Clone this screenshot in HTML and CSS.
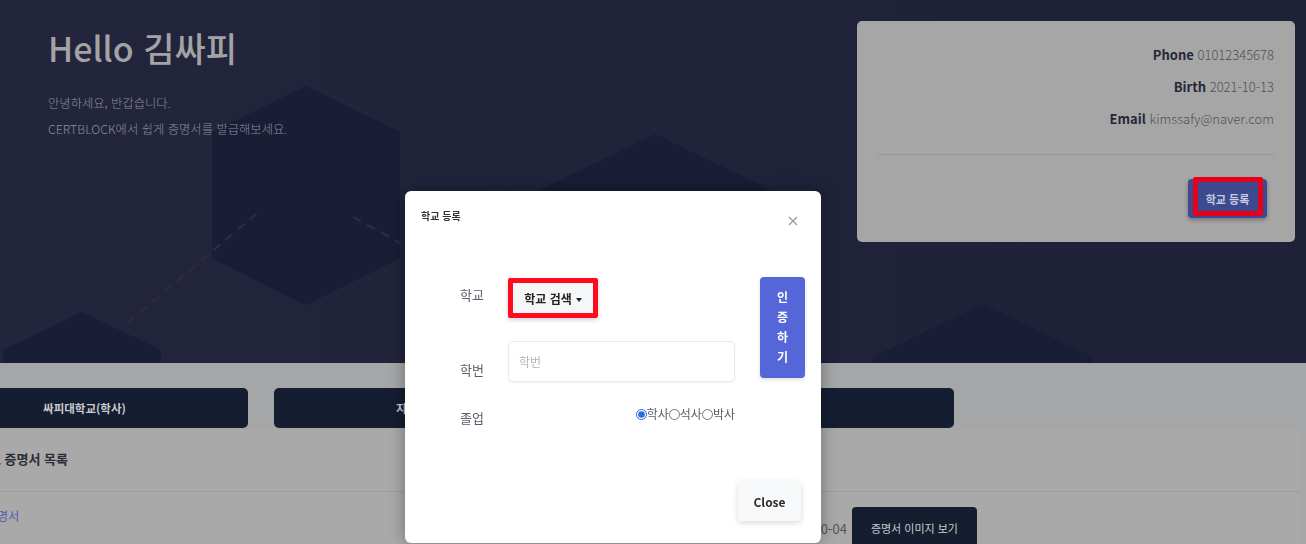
FILE: index.html
```html
<!DOCTYPE html>
<html lang="ko">
<head>
<meta charset="utf-8">
<title>CERTBLOCK - 학교 등록</title>
<link rel="stylesheet" href="styles.css">
</head>
<body>
<div class="page">
  <header class="hero">
    <svg class="hero-bg" width="1306" height="363" viewBox="0 0 1306 363" aria-hidden="true">
      <polygon class="hex" points="306,86 400,132 400,258 306,305 212,258 212,132"/>
      <polygon class="hex" points="655,134 770,190 770,340 655,396 540,340 540,190"/>
      <polygon class="hex" points="983,304 1093,357 1093,500 983,553 873,500 873,357"/>
      <polygon class="hex" points="82,312 161,350 161,500 82,540 3,500 3,350"/>
      <line class="dash" x1="128" y1="323" x2="256" y2="214"/>
      <line class="dash" x1="353" y1="217" x2="400" y2="243"/>
    </svg>
    <div class="greet">
      <h1 class="greet-title">Hello 김싸피</h1>
      <p class="greet-text">안녕하세요, 반갑습니다.<br>CERTBLOCK에서 쉽게 증명서를 발급해보세요.</p>
    </div>
    <aside class="profile">
      <dl class="profile-info">
        <div class="info-row"><dt>Phone</dt> <dd>01012345678</dd></div>
        <div class="info-row"><dt>Birth</dt> <dd>2021-10-13</dd></div>
        <div class="info-row"><dt>Email</dt> <dd>kimssafy@naver.com</dd></div>
      </dl>
      <hr class="profile-line">
      <div class="profile-foot">
        <button class="btn-school mark">학교 등록</button>
      </div>
    </aside>
  </header>

  <section class="content">
    <nav class="tabs">
      <button class="tab">싸피대학교(학사)</button>
      <button class="tab">지역대학교(석사)</button>
      <button class="tab">싸피고(졸업)</button>
    </nav>
    <div class="cert-card">
      <h2 class="cert-title">학교 증명서 목록</h2>
      <div class="cert-row">
        <a class="cert-name" href="#">졸업증명서</a>
        <div class="cert-meta">
          <span class="cert-date">2021-10-04</span>
          <button class="btn-dark">증명서 이미지 보기</button>
        </div>
      </div>
    </div>
  </section>
</div>

<div class="modal" role="dialog" aria-label="학교 등록">
  <div class="modal-head">
    <h3 class="modal-title">학교 등록</h3>
    <button class="modal-x" aria-label="close">
      <svg width="10" height="10" viewBox="0 0 10 10"><path d="M1 1L9 9M9 1L1 9" stroke="#9a9a9a" stroke-width="1.3" fill="none"/></svg>
    </button>
  </div>
  <div class="modal-body">
    <label class="lab lab-1">학교</label>
    <button class="dropdown">학교 검색</button>
    <button class="verify">인증하기</button>
    <label class="lab lab-2">학번</label>
    <input class="field" type="text" placeholder="학번">
    <label class="lab lab-3">졸업</label>
    <div class="radios">
      <label class="radio"><input type="radio" name="deg" checked>학사</label>
      <label class="radio"><input type="radio" name="deg">석사</label>
      <label class="radio"><input type="radio" name="deg">박사</label>
    </div>
  </div>
  <div class="modal-foot">
    <button class="btn-close">Close</button>
  </div>
</div>
</body>
</html>
```

FILE: styles.css
```css
* { box-sizing: border-box; }

html, body {
  margin: 0;
  height: 544px;
  overflow: hidden;
}

body {
  font-family: "Noto Sans CJK KR", "Noto Sans", sans-serif;
  background: #a4a6a8;
  color: #333;
}

button, input {
  font-family: inherit;
}

/* ---------- hero ---------- */
.hero {
  position: relative;
  height: 363px;
  display: flex;
  justify-content: space-between;
  align-items: flex-start;
  padding: 0 11px 0 48px;
  background: linear-gradient(90deg, #22253b 0%, #20233a 50%, #1f2139 100%);
  overflow: hidden;
}

.hero-bg {
  position: absolute;
  left: 0;
  top: 0;
  z-index: 0;
}

.hex { fill: #191d36; }

.dash {
  stroke: #2f2a44;
  stroke-width: 2.5;
  stroke-dasharray: 9 7;
}

.greet {
  position: relative;
  z-index: 1;
  padding-top: 27px;
}

.greet-title {
  margin: 0;
  font-size: 34px;
  line-height: 42px;
  font-weight: 500;
  color: #a3a3a3;
}

.greet-text {
  margin: 21px 0 0;
  font-size: 12.3px;
  line-height: 26px;
  font-weight: 300;
  color: #8d8f99;
}

.profile {
  position: relative;
  z-index: 1;
  margin-top: 21px;
  width: 438px;
  height: 221px;
  background: #a6a6a6;
  border-radius: 5px;
}

.profile-info {
  margin: 0;
  padding: 18px 21px 0;
  text-align: right;
  font-size: 13px;
}

.info-row {
  line-height: 32px;
}

.info-row dt {
  display: inline;
  font-weight: 700;
  color: #262839;
}

.info-row dd {
  display: inline;
  margin: 0;
  font-weight: 300;
  color: #4f5058;
}

.profile-line {
  margin: 19px 21px 0;
  border: 0;
  border-top: 1px solid #969696;
}

.profile-foot {
  display: flex;
  justify-content: flex-end;
  padding: 24px 28px 0;
}

.btn-school {
  position: relative;
  width: 79px;
  height: 39px;
  border: 0;
  border-radius: 4px;
  background: #3c4a8f;
  color: #c8cbe0;
  font-size: 11px;
  font-weight: 700;
  box-shadow: 0 2px 4px rgba(0, 0, 0, 0.3);
}

.mark::after {
  content: "";
  position: absolute;
  left: 5px;
  right: 4px;
  top: -2px;
  bottom: 2px;
  border: 5px solid #e6001c;
  border-radius: 2px;
}

/* ---------- content ---------- */
.content {
  margin-left: -79px;
  margin-right: 6px;
}

.tabs {
  display: flex;
  gap: 26px;
  padding-top: 25px;
  margin-bottom: 2px;
}

.tab {
  width: 327px;
  height: 40px;
  border: 0;
  border-radius: 5px;
  background: #151d31;
  color: #c9cacd;
  font-size: 11.5px;
  font-weight: 700;
}

.cert-card {
  background: #a9a9a9;
  border-radius: 4px;
  height: 200px;
}

.cert-title {
  margin: 0;
  padding: 19px 0 22px 56px;
  font-size: 13px;
  line-height: 20px;
  font-weight: 700;
  color: #2b2d38;
  border-bottom: 1px solid #9c9c9c;
}

.cert-row {
  display: flex;
  align-items: flex-start;
  padding: 14px 323px 0 43px;
}

.cert-name {
  flex: 1;
  font-size: 12px;
  line-height: 20px;
  color: #4f5fb0;
  text-decoration: none;
}

.cert-meta {
  display: flex;
  align-items: center;
  gap: 5px;
  margin-top: 1px;
}

.cert-date {
  font-size: 13px;
  color: #555;
}

.btn-dark {
  height: 42px;
  padding: 0 19px;
  border: 0;
  border-radius: 4px;
  background: #151d31;
  color: #c9cacd;
  font-size: 11px;
}

/* ---------- modal ---------- */
.modal {
  position: fixed;
  left: 405px;
  top: 191px;
  width: 416px;
  background: #fff;
  border-radius: 6px;
  box-shadow: 0 0 16px rgba(0, 0, 0, 0.35);
  z-index: 10;
}

.modal-head {
  display: flex;
  justify-content: space-between;
  align-items: flex-start;
  height: 32px;
  padding: 18px 23px 0 16px;
}

.modal-title {
  margin: 0;
  font-size: 10px;
  line-height: 14px;
  font-weight: 700;
  color: #333;
}

.modal-x {
  display: block;
  margin-top: 7px;
  padding: 0;
  border: 0;
  background: none;
  width: 10px;
  height: 10px;
  line-height: 0;
}

.modal-body {
  display: grid;
  grid-template-columns: 48px 227px 25px 45px;
  grid-template-rows: 42px 41px 22px;
  row-gap: 22px;
  padding: 54px 0 0 55px;
}

.lab {
  grid-column: 1;
  align-self: start;
  font-size: 13px;
  line-height: 18px;
  color: #5b5e68;
}

.lab-1 { margin-top: 9px; }
.lab-2 { margin-top: 20px; }
.lab-3 { margin-top: 5px; }

.dropdown {
  grid-column: 2;
  justify-self: start;
  align-self: start;
  margin-top: 1px;
  width: 90px;
  height: 40px;
  padding: 0;
  border: 5px solid #ff0a1e;
  border-radius: 2px;
  background: #f5f6f8;
  color: #222;
  font-size: 12px;
  font-weight: 700;
  box-shadow: 0 2px 5px rgba(0, 0, 0, 0.18);
}

.dropdown::after {
  content: "";
  display: inline-block;
  margin-left: 4px;
  vertical-align: 2px;
  border-left: 3.5px solid transparent;
  border-right: 3.5px solid transparent;
  border-top: 4px solid #222;
}

.verify {
  grid-column: 4;
  grid-row: 1 / span 2;
  align-self: start;
  width: 45px;
  height: 101px;
  padding: 10px 16px 11px;
  border: 0;
  border-radius: 4px;
  background: #5567d8;
  color: #fff;
  font-size: 12px;
  line-height: 20px;
  font-weight: 700;
  word-break: break-all;
  box-shadow: 0 2px 4px rgba(0, 0, 0, 0.12);
}

.field {
  grid-column: 2;
  width: 227px;
  height: 41px;
  padding: 0 10px;
  border: 1px solid #e8eaed;
  border-radius: 5px;
  font-size: 12px;
  box-shadow: 0 1px 3px rgba(0, 0, 0, 0.06);
}

.field::placeholder { color: #b3b3b3; }

.radios {
  grid-column: 2;
  justify-self: end;
  align-self: start;
  margin-top: 1px;
  display: flex;
  font-size: 12px;
  line-height: 18px;
  color: #5b5e68;
}

.radio {
  display: flex;
  align-items: center;
}

.radio input {
  margin: 0;
  width: 11px;
  height: 11px;
  accent-color: #2d6ae6;
}

.modal-foot {
  display: flex;
  justify-content: flex-end;
  padding: 55px 20px 22px;
}

.btn-close {
  width: 63px;
  height: 40px;
  border: 0;
  border-radius: 4px;
  background: #f7f8fa;
  color: #2b2b2b;
  font-size: 12px;
  font-weight: 700;
  box-shadow: 0 2px 6px rgba(0, 0, 0, 0.15);
}
```
